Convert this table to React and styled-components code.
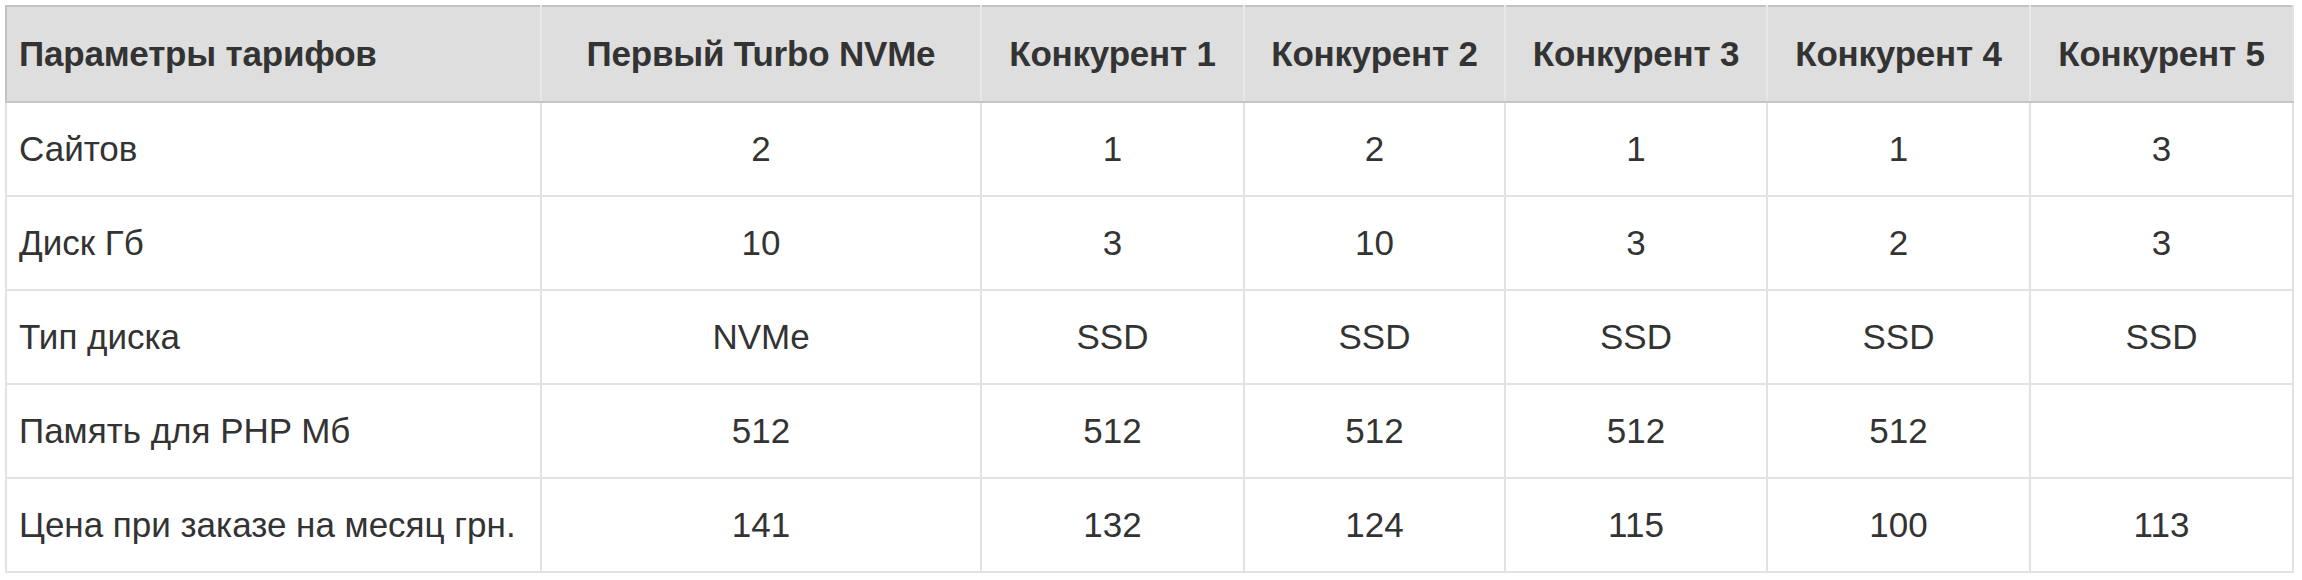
import React from 'react';
import styled, { createGlobalStyle } from 'styled-components';

const GlobalStyle = createGlobalStyle`
    html, body {
        margin: 0;
        padding: 0;
        background: #fff;
    }
`;

const Page = styled.div`
    padding: 5px 8px 6px 5px;
    font-family: "Liberation Sans", Arial, sans-serif;
    color: #333;
`;

const Table = styled.table`
    width: 2289px;
    border-collapse: collapse;
    table-layout: fixed;
    border: 2px solid #e2e2e2;
    border-top-color: #c2c2c2;
`;

const HeadCell = styled.th`
    height: 94px;
    padding: 0 12px;
    background: #dedede;
    border-left: 2px solid ${props => props.$first ? '#c2c2c2' : '#e8e8e8'};
    border-bottom: 2px solid #c6c6c6;
    font-size: 35px;
    font-weight: 700;
    letter-spacing: -0.2px;
    text-align: ${props => props.$first ? 'left' : 'center'};
    white-space: nowrap;
`;

const Row = styled.tr`
    height: 94px;
`;

const Cell = styled.td`
    padding: 0 12px;
    border: 2px solid #e2e2e2;
    font-size: 35px;
    font-weight: 400;
    letter-spacing: 0;
    text-align: ${props => props.$first ? 'left' : 'center'};
    white-space: nowrap;
`;

const widths = [535, 440, 263, 261, 262, 263, 263];

const head = [
    'Параметры тарифов',
    'Первый Turbo NVMe',
    'Конкурент 1',
    'Конкурент 2',
    'Конкурент 3',
    'Конкурент 4',
    'Конкурент 5',
];

const rows = [
    ['Сайтов', '2', '1', '2', '1', '1', '3'],
    ['Диск Гб', '10', '3', '10', '3', '2', '3'],
    ['Тип диска', 'NVMe', 'SSD', 'SSD', 'SSD', 'SSD', 'SSD'],
    ['Память для PHP Мб', '512', '512', '512', '512', '512', ''],
    ['Цена при заказе на месяц грн.', '141', '132', '124', '115', '100', '113'],
];

const App = () => {
    return (
        <>
            <GlobalStyle />
            <Page>
                <Table>
                    <colgroup>
                        {widths.map((w, i) => <col key={i} style={{ width: w }} />)}
                    </colgroup>
                    <thead>
                        <tr>
                            {head.map((h, i) => (
                                <HeadCell key={i} $first={i === 0}>{h}</HeadCell>
                            ))}
                        </tr>
                    </thead>
                    <tbody>
                        {rows.map((r, ri) => (
                            <Row key={ri}>
                                {r.map((c, ci) => (
                                    <Cell key={ci} $first={ci === 0}>{c}</Cell>
                                ))}
                            </Row>
                        ))}
                    </tbody>
                </Table>
            </Page>
        </>
    );
};

export default App;
